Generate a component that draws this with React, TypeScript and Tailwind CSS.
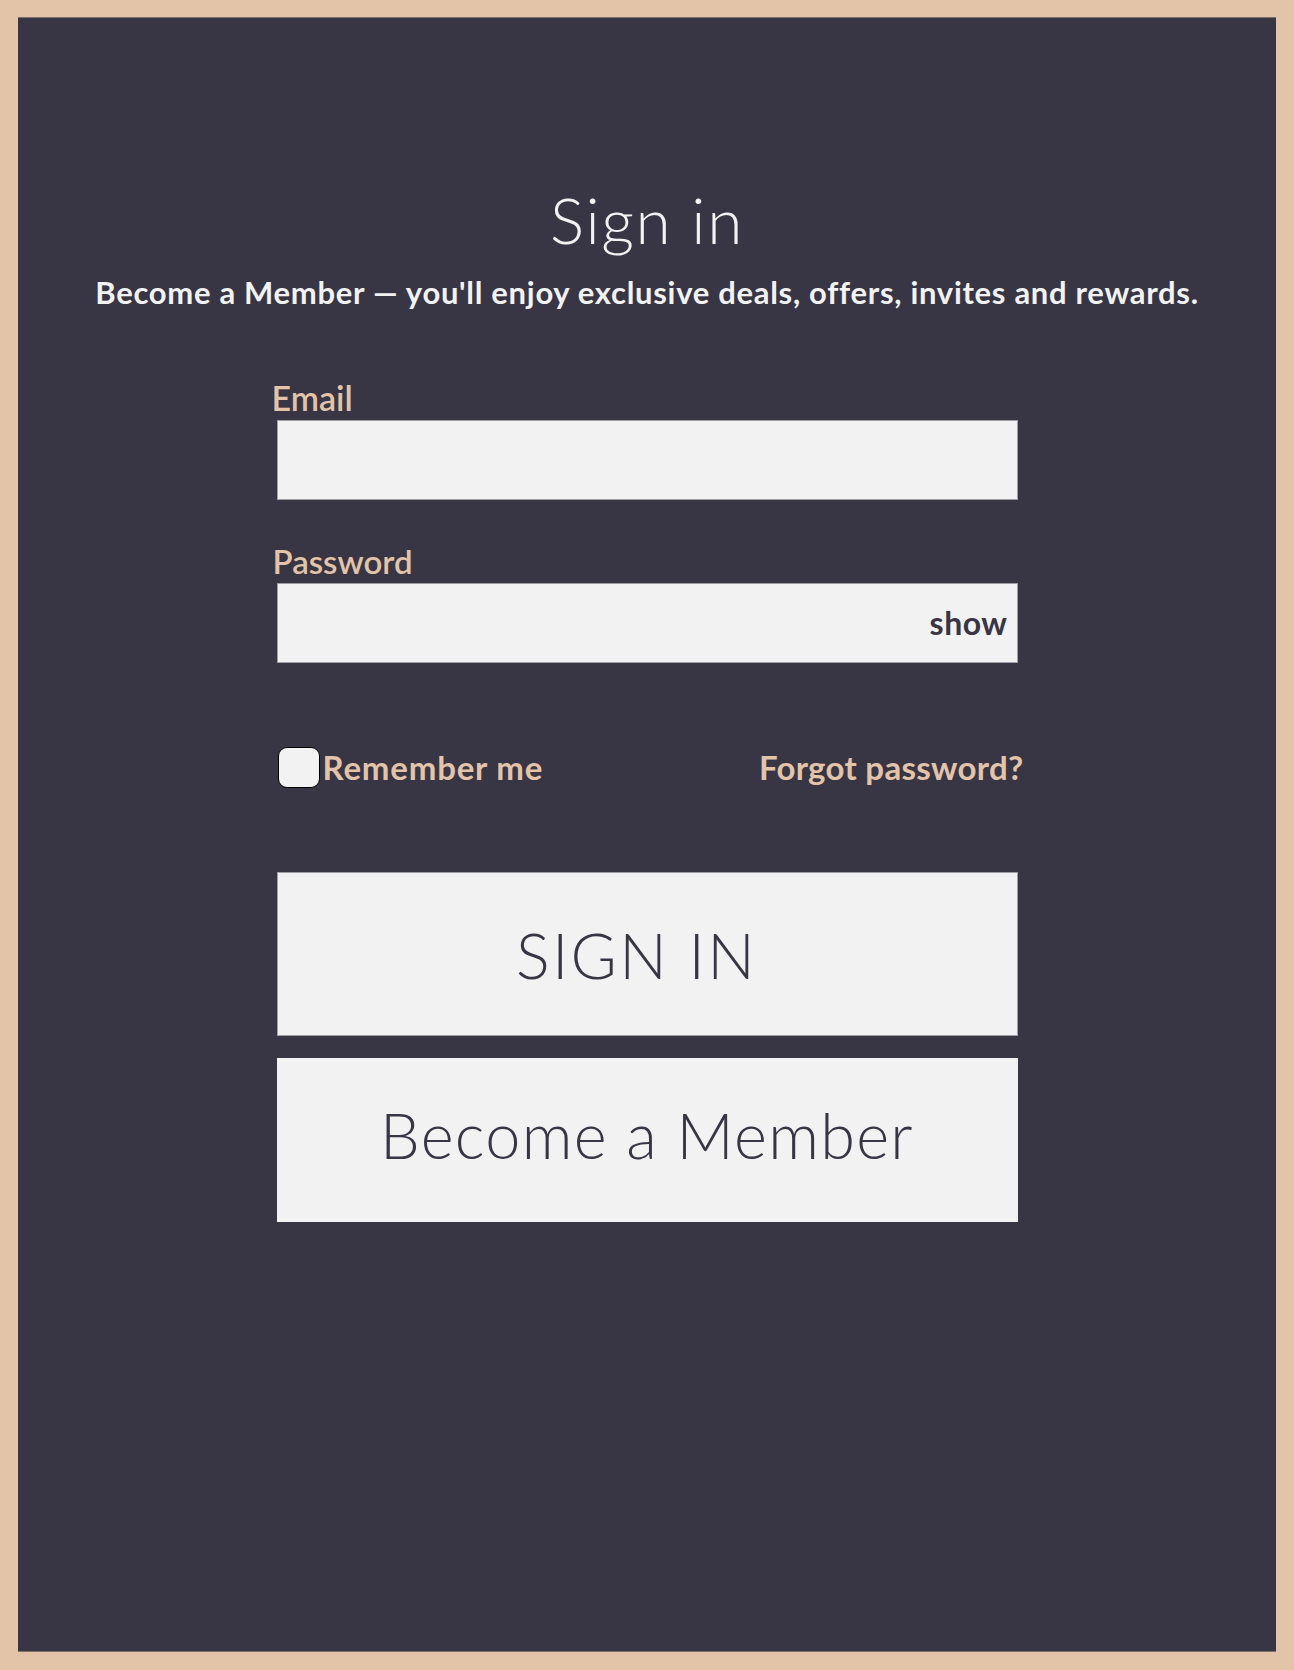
import { useState } from 'react';

const font = { fontFamily: 'Lato, "Open Sans", sans-serif' };

export default function App() {
  const [showPw, setShowPw] = useState(false);
  const [remember, setRemember] = useState(false);

  return (
    <div className="h-[1670px] w-full bg-[#e3c4a8] px-[18px] pt-[17px] pb-[18px]" style={font}>
      <div className="flex h-full flex-col items-center border-y border-[#7d716c] bg-[#383545]">
        {/* Heading */}
        <h1 className="mt-[170px] text-[64px] font-light leading-none tracking-[1.6px] text-[#f2f2f2]">Sign in</h1>
        <p className="mt-[25px] text-[31px] font-bold leading-none tracking-[0.7px] text-[#f2f2f2]">
          Become a Member — you'll enjoy exclusive deals, offers, invites and rewards.
        </p>

        {/* Form */}
        <form className="mt-[73px] flex w-[741px] flex-col" onSubmit={(e) => e.preventDefault()}>
          <label htmlFor="email" className="-ml-[5px] text-[34px] font-semibold leading-none text-[#e3c4a8]">
            Email
          </label>
          <input
            id="email"
            type="email"
            className="mt-[5px] h-[80px] w-full border border-[#a09fa6] bg-[#f2f2f2] px-4 text-[28px] text-[#383545] outline-none"
          />

          <label htmlFor="password" className="-ml-[4px] mt-[45px] text-[33px] font-semibold leading-none text-[#e3c4a8]">
            Password
          </label>
          <div className="relative mt-[5px] h-[80px] w-full">
            <input
              id="password"
              type={showPw ? 'text' : 'password'}
              className="h-full w-full border border-[#a09fa6] bg-[#f2f2f2] px-4 pr-28 text-[28px] text-[#383545] outline-none"
            />
            <button
              type="button"
              onClick={() => setShowPw(!showPw)}
              className="absolute right-[10px] top-1/2 -translate-y-1/2 text-[32px] font-bold leading-none tracking-[0.5px] text-[#383545]"
            >
              {showPw ? 'hide' : 'show'}
            </button>
          </div>

          <div className="mt-[84px] flex h-[41px] w-[747px] items-center justify-between pl-px">
            <label className="flex items-center gap-[3px] text-[33px] font-bold leading-none tracking-[0.8px] text-[#e3c4a8]">
              <button
                type="button"
                onClick={() => setRemember(!remember)}
                className="flex h-[41px] w-[42px] items-center justify-center rounded-[9px] border border-black bg-[#f2f2f2] text-[24px] text-[#383545]"
              >
                {remember ? '✓' : ''}
              </button>
              Remember me
            </label>
            <a href="#" className="text-[33px] font-bold leading-none tracking-[0.3px] text-[#e3c4a8]">
              Forgot password?
            </a>
          </div>

          <button
            type="submit"
            className="mt-[84px] flex h-[164px] w-full items-center justify-center border border-[#a09fa6] bg-[#f2f2f2] pr-[21px] text-[63px] font-light leading-none tracking-[2.3px] text-[#383545]"
          >
            SIGN IN
          </button>
          <button
            type="button"
            className="mt-[22px] flex h-[164px] w-full items-center justify-center bg-[#f2f2f2] pb-[12px] text-[63px] font-light leading-none tracking-[1.3px] text-[#383545]"
          >
            Become a Member
          </button>
        </form>
      </div>
    </div>
  );
}
